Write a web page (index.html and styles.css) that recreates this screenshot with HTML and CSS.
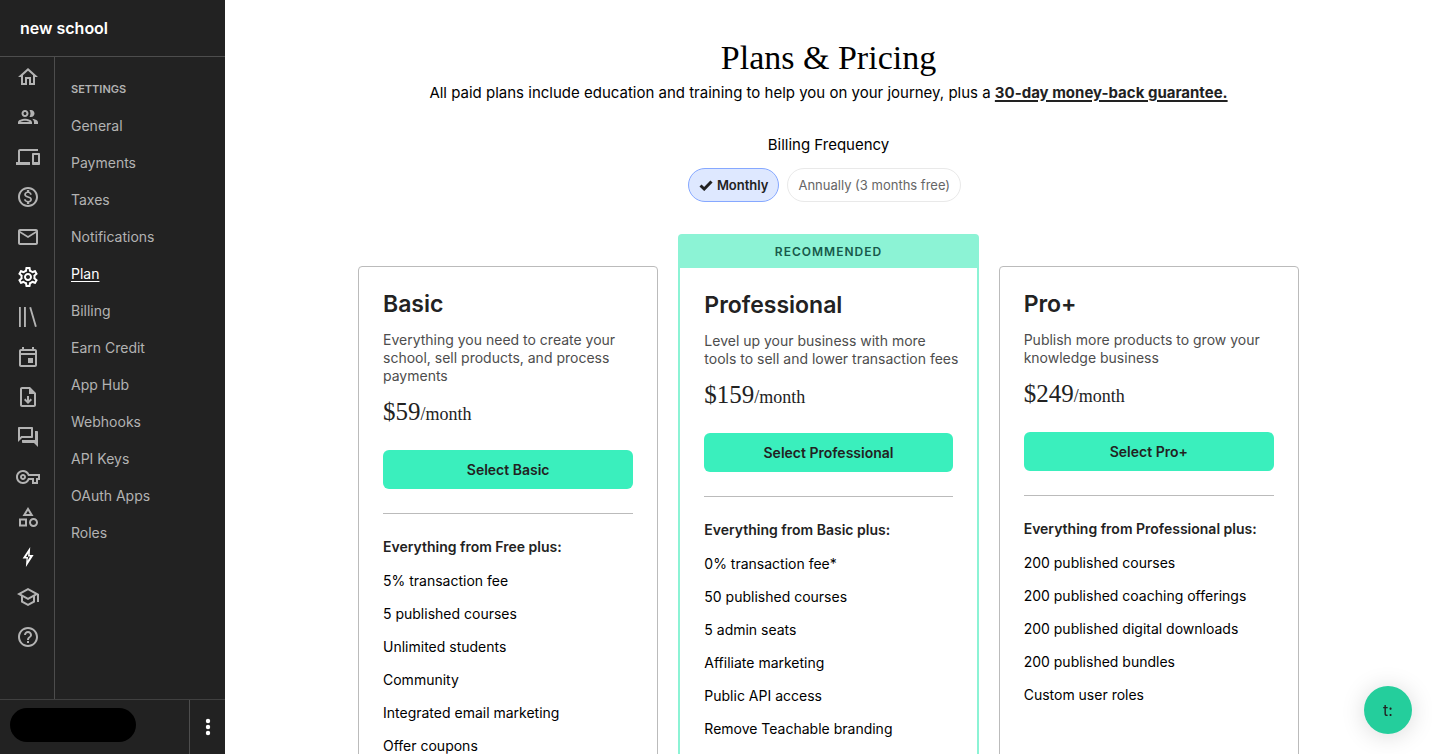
FILE: index.html
```html
<!DOCTYPE html>
<html lang="en">
<head>
<meta charset="utf-8">
<meta name="viewport" content="width=device-width, initial-scale=1">
<title>Plans &amp; Pricing</title>
<link rel="stylesheet" href="styles.css">
</head>
<body>
<div class="app">
  <aside class="sidebar">
    <header class="school">new school</header>
    <div class="navs">
      <nav class="rail" aria-label="Main">
        <a href="#" aria-label="Home"><svg viewBox="0 0 24 24"><path d="M12 5.69l5 4.5V18h-2v-6H9v6H7v-7.81l5-4.5M12 3L2 12h3v8h6v-6h2v6h6v-8h3L12 3z"/></svg></a>
        <a href="#" aria-label="Users"><svg viewBox="0 0 24 24"><path d="M9 13.75c-2.34 0-7 1.17-7 3.5V19h14v-1.75c0-2.33-4.66-3.5-7-3.5zM4.34 17c.84-.58 2.87-1.25 4.66-1.25s3.82.67 4.66 1.25H4.34zM9 12c1.93 0 3.5-1.57 3.5-3.5S10.93 5 9 5 5.5 6.57 5.5 8.5 7.07 12 9 12zm0-5c.83 0 1.5.67 1.5 1.5S9.83 10 9 10s-1.5-.67-1.5-1.5S8.17 7 9 7zm7.04 6.81c1.16.84 1.96 1.96 1.96 3.44V19h4v-1.75c0-2.02-3.5-3.17-5.96-3.44zM15 12c1.93 0 3.5-1.57 3.5-3.5S16.93 5 15 5c-.54 0-1.04.13-1.5.35.63.89 1 1.98 1 3.15s-.37 2.26-1 3.15c.46.22.96.35 1.5.35z"/></svg></a>
        <a href="#" aria-label="Site"><svg viewBox="0 0 24 24"><path d="M4 6h18V4H4c-1.1 0-2 .9-2 2v11H0v3h14v-3H4V6zm19 2h-6c-.55 0-1 .45-1 1v10c0 .55.45 1 1 1h6c.55 0 1-.45 1-1V9c0-.55-.45-1-1-1zm-1 9h-4v-7h4v7z"/></svg></a>
        <a href="#" aria-label="Sales"><svg viewBox="0 0 24 24"><path d="M12 2C6.48 2 2 6.48 2 12s4.48 10 10 10 10-4.48 10-10S17.52 2 12 2zm0 18c-4.41 0-8-3.59-8-8s3.59-8 8-8 8 3.59 8 8-3.59 8-8 8zm.31-8.86c-1.77-.45-2.34-.94-2.34-1.67 0-.84.79-1.43 2.1-1.43 1.38 0 1.9.66 1.94 1.64h1.71c-.05-1.34-.87-2.57-2.49-2.97V5H10.9v1.69c-1.51.32-2.72 1.3-2.72 2.81 0 1.79 1.49 2.69 3.66 3.21 1.95.46 2.34 1.15 2.34 1.87 0 .53-.39 1.39-2.1 1.39-1.6 0-2.23-.72-2.32-1.64H8.04c.1 1.7 1.36 2.66 2.86 2.97V19h2.34v-1.67c1.52-.29 2.72-1.16 2.73-2.77-.01-2.2-1.9-2.96-3.66-3.42z"/></svg></a>
        <a href="#" aria-label="Emails"><svg viewBox="0 0 24 24"><path d="M22 6c0-1.1-.9-2-2-2H4c-1.1 0-2 .9-2 2v12c0 1.1.9 2 2 2h16c1.1 0 2-.9 2-2V6zm-2 0l-8 5-8-5h16zm0 12H4V8l8 5 8-5v10z"/></svg></a>
        <a href="#" class="active" aria-label="Settings"><svg viewBox="0 0 24 24"><path d="M19.43 12.98c.04-.32.07-.64.07-.98 0-.34-.03-.66-.07-.98l2.11-1.65c.19-.15.24-.42.12-.64l-2-3.46c-.09-.16-.26-.25-.44-.25-.06 0-.12.01-.17.03l-2.49 1c-.52-.4-1.08-.73-1.69-.98l-.38-2.65C14.46 2.18 14.25 2 14 2h-4c-.25 0-.46.18-.49.42l-.38 2.65c-.61.25-1.17.59-1.69.98l-2.49-1c-.06-.02-.12-.03-.18-.03-.17 0-.34.09-.43.25l-2 3.46c-.13.22-.07.49.12.64l2.11 1.65c-.04.32-.07.65-.07.98 0 .33.03.66.07.98l-2.11 1.65c-.19.15-.24.42-.12.64l2 3.46c.09.16.26.25.44.25.06 0 .12-.01.17-.03l2.49-1c.52.4 1.08.73 1.69.98l.38 2.65c.03.24.24.42.49.42h4c.25 0 .46-.18.49-.42l.38-2.65c.61-.25 1.17-.59 1.69-.98l2.49 1c.06.02.12.03.18.03.17 0 .34-.09.43-.25l2-3.46c.12-.22.07-.49-.12-.64l-2.11-1.65zm-1.98-1.71c.04.31.05.52.05.73 0 .21-.02.43-.05.73l-.14 1.13.89.7 1.08.84-.7 1.21-1.27-.51-1.04-.42-.9.68c-.43.32-.84.56-1.25.73l-1.06.43-.16 1.13-.2 1.35h-1.4l-.19-1.35-.16-1.13-1.06-.43c-.43-.18-.83-.41-1.23-.71l-.91-.7-1.06.43-1.27.51-.7-1.21 1.08-.84.89-.7-.14-1.13c-.03-.31-.05-.54-.05-.74s.02-.43.05-.73l.14-1.13-.89-.7-1.08-.84.7-1.21 1.27.51 1.04.42.9-.68c.43-.32.84-.56 1.25-.73l1.06-.43.16-1.13.2-1.35h1.39l.19 1.35.16 1.13 1.06.43c.43.18.83.41 1.23.71l.91.7 1.06-.43 1.27-.51.7 1.21-1.07.85-.89.7.14 1.13zM12 8c-2.21 0-4 1.79-4 4s1.79 4 4 4 4-1.79 4-4-1.79-4-4-4zm0 6c-1.1 0-2-.9-2-2s.9-2 2-2 2 .9 2 2-.9 2-2 2z"/></svg></a>
        <a href="#" aria-label="Courses"><svg viewBox="0 0 24 24"><path d="M3 2h1.800v20H3zM8 2h1.900v20H8zM13.300 2.400l1.800-.5 5.700 19.700-1.800.5z"/></svg></a>
        <a href="#" aria-label="Coaching"><svg viewBox="0 0 24 24"><path d="M19 4h-1V2h-2v2H8V2H6v2H5c-1.110 0-1.990.9-1.990 2L3 20c0 1.100.89 2 2 2h14c1.100 0 2-.9 2-2V6c0-1.100-.9-2-2-2zm0 16H5V10h14v10zm0-12H5V6h14v2zm-7 5h5v5h-5z"/></svg></a>
        <a href="#" aria-label="Downloads"><svg viewBox="0 0 24 24"><path d="M14 2H6c-1.100 0-2 .9-2 2v16c0 1.100.9 2 2 2h12c1.100 0 2-.9 2-2V8l-6-6zM6 20V4h7v5h5v11H6zM11 11h2v4.200l1.600-1.600L16 15l-4 4-4-4 1.400-1.400 1.600 1.600z"/></svg></a>
        <a href="#" aria-label="Community"><svg viewBox="0 0 24 24"><path d="M15 4v7H5.170L4 12.170V4h11m1-2H3c-.55 0-1 .45-1 1v14l4-4h10c.55 0 1-.45 1-1V3c0-.55-.45-1-1-1zm5 4h-2v9H6v2c0 .55.45 1 1 1h11l4 4V7c0-.55-.45-1-1-1z"/></svg></a>
        <a href="#" aria-label="Access"><svg viewBox="0 0 24 24"><path d="M22 19h-6v-4h-2.680c-1.140 2.420-3.600 4-6.320 4-3.860 0-7-3.140-7-7s3.140-7 7-7c2.720 0 5.170 1.580 6.320 4H24v6h-2v4zm-4-2h2v-4h2v-2H11.940l-.23-.67C11.010 8.340 9.110 7 7 7c-2.760 0-5 2.240-5 5s2.240 5 5 5c2.110 0 4.010-1.340 4.710-3.330l.23-.67H18v4zM7 15c-1.650 0-3-1.350-3-3s1.350-3 3-3 3 1.350 3 3-1.350 3-3 3zm0-4c-.55 0-1 .45-1 1s.45 1 1 1 1-.45 1-1-.45-1-1-1z"/></svg></a>
        <a href="#" aria-label="Bundles"><svg viewBox="0 0 24 24"><path d="M12 2l-5.500 9h11L12 2zm0 3.840L13.930 9h-3.870L12 5.840zM17.500 13c-2.490 0-4.500 2.010-4.500 4.500s2.010 4.500 4.500 4.500 4.500-2.010 4.500-4.500-2.010-4.500-4.500-4.500zm0 7c-1.380 0-2.500-1.120-2.500-2.500s1.120-2.500 2.500-2.500 2.500 1.120 2.500 2.500-1.120 2.500-2.500 2.500zM3 21.500h8v-8H3v8zm2-6h4v4H5v-4z"/></svg></a>
        <a href="#" class="active" aria-label="Upgrade"><svg viewBox="0 0 24 24"><path d="M14.200 2L6.600 13.600h3.900L9.900 22 17.600 9.900h-3.900zM12.300 8.300l-.3 3.300h2.100l-2.600 4.100.6-3.800H10z"/></svg></a>
        <a href="#" aria-label="Learn"><svg viewBox="0 0 24 24"><path d="M12 3L1 9l4 2.180v6L12 21l7-3.820v-6l2-1.090V17h2V9L12 3zm6.820 6L12 12.720 5.180 9 12 5.280 18.820 9zM17 15.990l-5 2.730-5-2.730v-3.720L12 15l5-2.730v3.720z"/></svg></a>
        <a href="#" aria-label="Help"><svg viewBox="0 0 24 24"><path d="M11 18h2v-2h-2v2zm1-16C6.480 2 2 6.480 2 12s4.480 10 10 10 10-4.480 10-10S17.520 2 12 2zm0 18c-4.410 0-8-3.590-8-8s3.590-8 8-8 8 3.590 8 8-3.590 8-8 8zm0-14c-2.210 0-4 1.790-4 4h2c0-1.100.9-2 2-2s2 .9 2 2c0 2-3 1.750-3 5h2c0-2.250 3-2.500 3-5 0-2.210-1.790-4-4-4z"/></svg></a>
      </nav>
      <nav class="settings" aria-labelledby="settings-title">
        <h2 class="settings-title" id="settings-title">SETTINGS</h2>
        <a href="#">General</a>
        <a href="#">Payments</a>
        <a href="#">Taxes</a>
        <a href="#">Notifications</a>
        <a href="#" class="current" aria-current="page">Plan</a>
        <a href="#">Billing</a>
        <a href="#">Earn Credit</a>
        <a href="#">App Hub</a>
        <a href="#">Webhooks</a>
        <a href="#">API Keys</a>
        <a href="#">OAuth Apps</a>
        <a href="#">Roles</a>
      </nav>
    </div>
    <footer class="account">
      <div class="account-name"><span class="redacted"></span></div>
      <button class="more" type="button" aria-label="Account menu"><svg viewBox="0 0 24 24"><circle cx="12" cy="6" r="2.200"/><circle cx="12" cy="12" r="2.200"/><circle cx="12" cy="18" r="2.200"/></svg></button>
    </footer>
  </aside>

  <main class="main">
    <h1 class="title">Plans &amp; Pricing</h1>
    <p class="intro">All paid plans include education and training to help you on your journey, plus a <a href="#">30-day money-back guarantee.</a></p>
    <fieldset class="frequency">
      <legend>Billing Frequency</legend>
      <div class="pills">
        <label class="pill"><input type="radio" name="frequency" checked><svg class="check" viewBox="0 0 14 12"><path d="M1.500 6.500l3.700 3.500L12.500 2.500"/></svg>Monthly</label>
        <label class="pill"><input type="radio" name="frequency"><svg class="check" viewBox="0 0 14 12"><path d="M1.500 6.500l3.700 3.500L12.500 2.500"/></svg>Annually (3 months free)</label>
      </div>
    </fieldset>
    <div class="plans">
      <section class="plan">
        <h2>Basic</h2>
        <p class="about">Everything you need to create your school, sell products, and process payments</p>
        <p class="price">$59<small>/month</small></p>
        <button class="select" type="button">Select Basic</button>
        <ul class="features">
          <li class="lead">Everything from Free plus:</li>
          <li>5% transaction fee</li>
          <li>5 published courses</li>
          <li>Unlimited students</li>
          <li>Community</li>
          <li>Integrated email marketing</li>
          <li>Offer coupons</li>
        </ul>
      </section>
      <div class="featured">
        <div class="badge">RECOMMENDED</div>
        <section class="plan">
          <h2>Professional</h2>
          <p class="about">Level up your business with more tools to sell and lower transaction fees</p>
          <p class="price">$159<small>/month</small></p>
          <button class="select" type="button">Select Professional</button>
          <ul class="features">
            <li class="lead">Everything from Basic plus:</li>
            <li>0% transaction fee*</li>
            <li>50 published courses</li>
            <li>5 admin seats</li>
            <li>Affiliate marketing</li>
            <li>Public API access</li>
            <li>Remove Teachable branding</li>
          </ul>
        </section>
      </div>
      <section class="plan">
        <h2>Pro+</h2>
        <p class="about">Publish more products to grow your knowledge business</p>
        <p class="price">$249<small>/month</small></p>
        <button class="select" type="button">Select Pro+</button>
        <ul class="features">
          <li class="lead">Everything from Professional plus:</li>
          <li>200 published courses</li>
          <li>200 published coaching offerings</li>
          <li>200 published digital downloads</li>
          <li>200 published bundles</li>
          <li>Custom user roles</li>
        </ul>
      </section>
    </div>
  </main>
</div>
<button class="chat" type="button">t:</button>
</body>
</html>
```
FILE: styles.css
```css
* { box-sizing: border-box; }

body {
  margin: 0;
  font-family: Inter, "Liberation Sans", sans-serif;
  font-size: 14px;
  color: #222;
  background: #fff;
}

h1, h2, p, ul { margin: 0; }

button, input { font: inherit; }

.app { display: flex; height: 100vh; }

/* Sidebar */
.sidebar {
  display: flex;
  flex-direction: column;
  flex: none;
  width: 225px;
  background: #222;
  color: #b3b3b3;
}

.school {
  padding: 16px 20px;
  border-bottom: 1px solid #4d4d4d;
  font-size: 16px;
  line-height: 24px;
  font-weight: 600;
  color: #fff;
}

.navs { display: flex; flex: 1; min-height: 0; }

.rail {
  display: flex;
  flex-direction: column;
  gap: 16px;
  width: 55px;
  padding: 8px 14px 8px 16px;
  border-right: 1px solid #4d4d4d;
}

.rail a { height: 24px; color: #b3b3b3; }
.rail a.active { color: #fff; }
.rail svg { display: block; width: 24px; height: 24px; fill: currentColor; }

.settings {
  display: flex;
  flex-direction: column;
  align-items: flex-start;
  flex: 1;
  padding: 24px 16px;
}

.settings-title {
  margin-bottom: 10px;
  font-size: 11px;
  line-height: 16px;
  font-weight: 600;
}

.settings a {
  line-height: 37px;
  color: #b3b3b3;
  text-decoration: none;
}

.settings a.current {
  color: #fff;
  text-decoration: underline;
  text-underline-offset: 2px;
}

.account { display: flex; border-top: 1px solid #404040; }

.account-name { flex: 1; padding: 8px 10px 12px; }

.redacted {
  display: block;
  width: 126px;
  height: 34px;
  border-radius: 17px;
  background: #000;
}

.more {
  display: grid;
  place-items: center;
  width: 36px;
  padding: 0;
  border: 0;
  border-left: 1px solid #4d4d4d;
  background: none;
}

.more svg { width: 24px; height: 24px; fill: #fff; }

/* Content */
.main {
  flex: 1;
  min-width: 0;
  padding: 36px 20px;
  overflow-y: auto;
  scrollbar-width: none;
  text-align: center;
}

.title {
  font-family: "Liberation Serif", serif;
  font-size: 34px;
  line-height: 44px;
  font-weight: 400;
  color: #000;
}

.intro { font-size: 15px; line-height: 26px; color: #000; }
.intro a { color: #222; font-weight: 700; text-underline-offset: 2px; text-decoration-thickness: 2px; }

.frequency { margin: 28px 0 0; padding: 0; border: 0; }
.frequency legend {
  width: 100%;
  padding: 0;
  font-size: 15px;
  line-height: 22px;
  color: #000;
}

.pills { display: flex; justify-content: center; padding-top: 12px; }

.pill {
  display: flex;
  align-items: center;
  gap: 4px;
  height: 34px;
  margin-right: 8px;
  padding: 0 10px;
  border: 1px solid #e9e9e9;
  border-radius: 17px;
  font-size: 13px;
  color: #666;
}

.pill input { position: absolute; opacity: 0; }
.check { display: none; width: 14px; height: 12px; fill: none; stroke: #222; stroke-width: 3; }

.pill:has(:checked) {
  border-color: #86a8ff;
  background: #dee8ff;
  color: #222;
  font-weight: 600;
}
.pill:has(:checked) .check { display: block; }

.plans {
  display: grid;
  grid-template-columns: repeat(3, 1fr);
  gap: 20px;
  max-width: 941px;
  margin: 32px auto 0;
  text-align: left;
}

.plan {
  min-height: 600px;
  margin-top: 32px;
  padding: 24px;
  border: 1px solid #bbb;
  border-radius: 4px;
}

.featured { display: flex; flex-direction: column; }

.featured .plan {
  flex: 1;
  margin-top: 0;
  border: 2px solid #8cf3d5;
  border-top: 0;
  border-radius: 0 0 4px 4px;
}

.badge {
  padding: 10px 0 8px;
  border-radius: 4px 4px 0 0;
  background: #8cf3d5;
  color: #17594a;
  font-size: 12px;
  line-height: 16px;
  font-weight: 600;
  letter-spacing: 1px;
  text-align: center;
}

.plan h2 { font-size: 23px; line-height: 26px; font-weight: 600; }

/* The copy may run slightly into the card's right padding */
.about { margin: 14px -8px 0 0; line-height: 18px; color: #4d4d4d; }

.price {
  margin-top: 11px;
  font-family: "Liberation Serif", serif;
  font-size: 25px;
  line-height: 32px;
}
.price small { font-size: 18px; }

.select {
  width: 100%;
  height: 39px;
  margin-top: 20px;
  border: 0;
  border-radius: 6px;
  background: #3aefbd;
  color: #222;
  font-weight: 600;
}

.features {
  display: flex;
  flex-direction: column;
  gap: 16px;
  margin-top: 24px;
  padding: 24px 0 0;
  border-top: 1px solid #bbb;
  list-style: none;
  line-height: 17px;
  color: #000;
}
.features .lead { padding-bottom: 1px; font-weight: 600; color: #222; }

.chat {
  position: fixed;
  right: 20px;
  bottom: 20px;
  width: 48px;
  height: 48px;
  padding: 0;
  border: 0;
  border-radius: 50%;
  background: #24ce9c;
  box-shadow: 0 2px 24px rgba(0, 0, 0, 0.15);
  color: #222;
  font-size: 16px;
}
```
